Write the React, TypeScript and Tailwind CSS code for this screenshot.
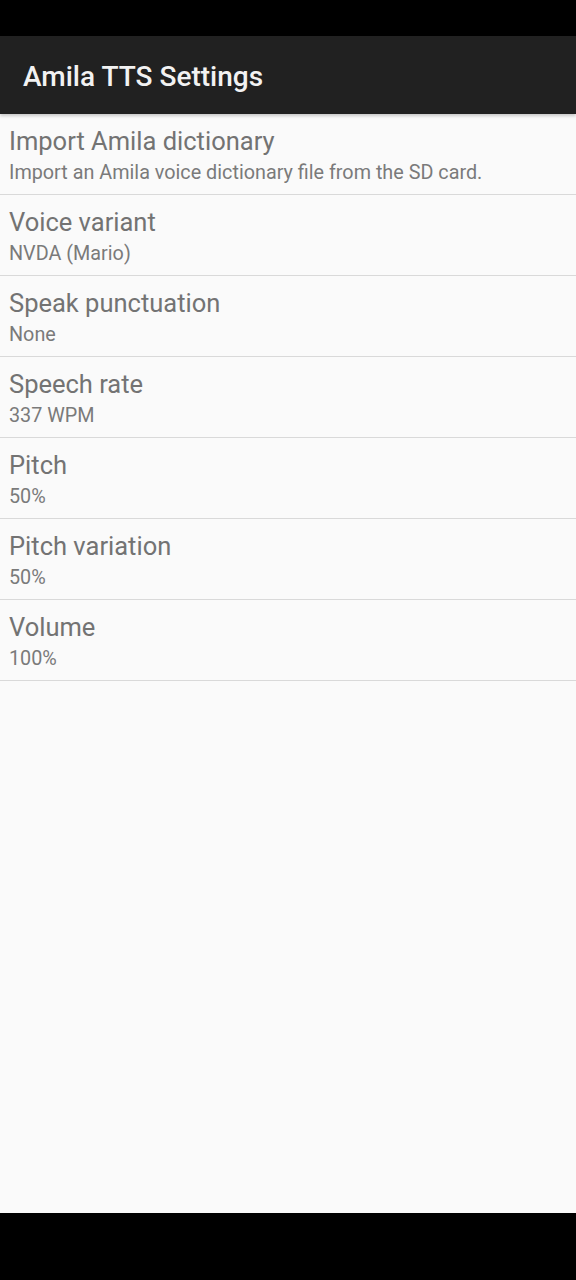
const items = [
  { title: 'Import Amila dictionary', summary: 'Import an Amila voice dictionary file from the SD card.' },
  { title: 'Voice variant', summary: 'NVDA (Mario)' },
  { title: 'Speak punctuation', summary: 'None' },
  { title: 'Speech rate', summary: '337 WPM' },
  { title: 'Pitch', summary: '50%' },
  { title: 'Pitch variation', summary: '50%' },
  { title: 'Volume', summary: '100%' },
];

function PrefItem({ title, summary }: { title: string; summary: string }): JSX.Element {
  return (
    <div className="h-[81px] border-b border-[#d9d9d9] px-[9px] pt-[12px]">
      <div className="text-[25.5px] leading-[30px] text-[#737373]">{title}</div>
      <div className="mt-[5px] text-[19.8px] leading-[24px] text-[#7a7a7a]">{summary}</div>
    </div>
  );
}

function App(): JSX.Element {
  return (
    <section className="flex h-[1280px] w-[576px] flex-col bg-black font-['Roboto',sans-serif]">
      <div className="h-[36px] bg-black" />
      <header className="relative z-10 flex h-[78px] items-center bg-[#212121] px-[23px] pt-[3px] shadow-[0_2px_3px_rgba(0,0,0,0.2)]">
        <h1 className="text-[28px] font-medium text-[#f2f2f2]">Amila TTS Settings</h1>
      </header>
      <main className="flex-1 bg-[#fafafa]">
        {items.map((item) => (
          <PrefItem key={item.title} title={item.title} summary={item.summary} />
        ))}
      </main>
      <div className="h-[67px] bg-black" />
    </section>
  );
}

export default App;
